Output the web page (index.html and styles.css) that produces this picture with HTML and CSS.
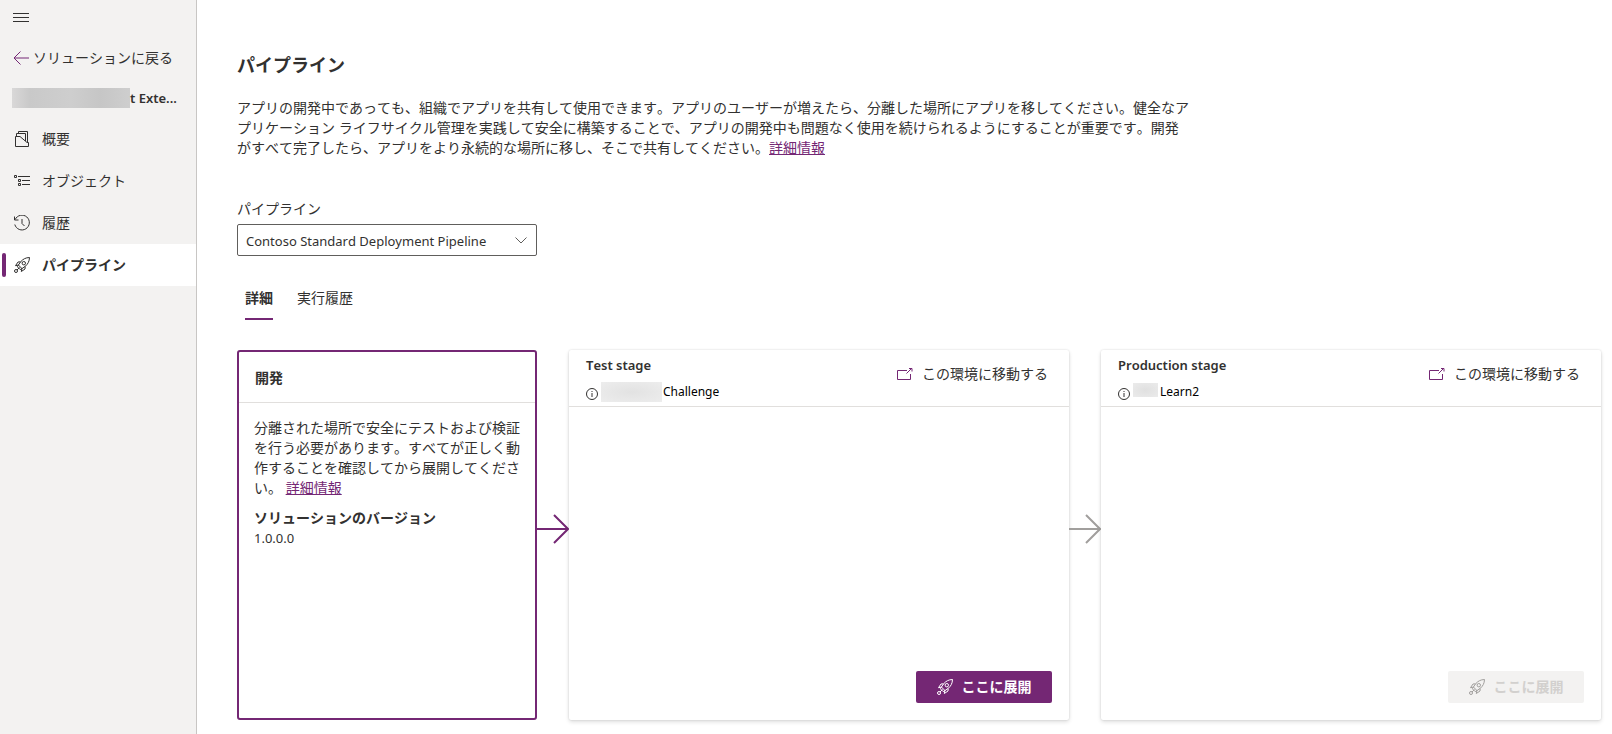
FILE: index.html
```html
<!DOCTYPE html>
<html lang="ja">
<head>
<meta charset="utf-8">
<meta name="viewport" content="width=device-width, initial-scale=1">
<title>パイプライン</title>
<link rel="stylesheet" href="styles.css">
</head>
<body>
<svg class="defs" aria-hidden="true">
  <symbol id="rocket" viewBox="0 0 16 16">
    <g fill="none" stroke="currentColor">
      <path d="M15.5.5C11.5.6 9 2.2 6.800 4.600L4.400 8l3.600 3.600 3.400-2.400C13.800 7 15.400 4.500 15.500.5z"/>
      <path d="M6.600 4.800 4 5 1.500 8.700l3-.6M11.200 9.400 11 12l-3.700 2.500.6-3M4.400 8l-1 1.800 2.800 2.800L8 11.600"/>
      <circle cx="9.800" cy="6.200" r="1.700"/>
      <circle cx="2" cy="14" r="1.500"/>
      <path d="M3 13l2.500-2.500"/>
    </g>
  </symbol>
  <symbol id="open" viewBox="0 0 16 12">
    <path fill="none" stroke="currentColor" d="M10 2.500H.5v9h13V6M9.500 5.500l5-5M12 .5h3v3"/>
  </symbol>
  <symbol id="info" viewBox="0 0 12 12">
    <circle cx="6" cy="6" r="5.500" fill="none" stroke="currentColor"/>
    <path fill="none" stroke="currentColor" d="M6 5v4M6 3v1"/>
  </symbol>
  <symbol id="arrow" viewBox="0 0 32 30">
    <path fill="none" stroke="currentColor" stroke-width="2" d="M0 15h31M17 1l14 14-14 14"/>
  </symbol>
</svg>
<div class="app">
  <nav class="sidebar">
    <button class="menu" type="button" aria-label="メニュー">
      <svg width="16" height="10" viewBox="0 0 16 10"><path fill="none" stroke="currentColor" d="M0 .5h16M0 4.500h16M0 8.500h16"/></svg>
    </button>
    <a class="back" href="#">
      <svg width="16" height="14" viewBox="0 0 16 14"><path fill="none" stroke="currentColor" d="M7.500.5 1 7l6.500 6.500M1 7h15"/></svg>
      <span>ソリューションに戻る</span>
    </a>
    <div class="solution"><span class="redacted redacted-name"></span><span>t Exte...</span></div>
    <ul class="nav">
      <li><a class="nav-item" href="#">
        <svg width="16" height="16" viewBox="0 0 16 16"><path fill="none" stroke="currentColor" d="M1.500 5.500v10h13v-4H13L6 5.500zM2.500 5V2.500h9v7.500M4.500 2V.5h9v10.500"/></svg>
        <span>概要</span></a></li>
      <li><a class="nav-item" href="#">
        <svg width="16" height="16" viewBox="0 0 16 16"><path fill="none" stroke="currentColor" d="M.5 2.500h2v2h-2zM4.500 6.500h2v2h-2zM4.500 10.500h2v2h-2zM4 3.500h12M8 7.500h8M8 11.500h8"/></svg>
        <span>オブジェクト</span></a></li>
      <li><a class="nav-item" href="#">
        <svg width="16" height="16" viewBox="0 0 16 16"><path fill="none" stroke="currentColor" d="M1.200 4.500A7.400 7.400 0 1 1 .8 9.500M.5 1.500v3.500H4.500M8 4v4.500L10.500 11"/></svg>
        <span>履歴</span></a></li>
      <li><a class="nav-item current" href="#" aria-current="page">
        <svg width="16" height="16"><use href="#rocket"/></svg>
        <span>パイプライン</span></a></li>
    </ul>
  </nav>
  <main class="main">
    <h1>パイプライン</h1>
    <p class="intro">アプリの開発中であっても、組織でアプリを共有して使用できます。アプリのユーザーが増えたら、分離した場所にアプリを移してください。健全なアプリケーション ライフサイクル管理を実践して安全に構築することで、アプリの開発中も問題なく使用を続けられるようにすることが重要です。開発がすべて完了したら、アプリをより永続的な場所に移し、そこで共有してください。<a href="#">詳細情報</a></p>
    <label class="field-label" for="pipeline">パイプライン</label>
    <div class="select-wrap">
      <select id="pipeline"><option>Contoso Standard Deployment Pipeline</option></select>
      <svg class="chevron" width="12" height="7" viewBox="0 0 12 7"><path fill="none" stroke="currentColor" d="M.5.5 6 6 11.500.5"/></svg>
    </div>
    <div class="tabs" role="tablist">
      <button class="tab selected" type="button" role="tab" aria-selected="true">詳細</button>
      <button class="tab" type="button" role="tab" aria-selected="false">実行履歴</button>
    </div>
    <div class="stages">
      <section class="dev">
        <h2 class="dev-head">開発</h2>
        <div class="dev-body">
          <p>分離された場所で安全にテストおよび検証を行う必要があります。すべてが正しく動作することを確認してから展開してください。 <a href="#">詳細情報</a></p>
          <h3>ソリューションのバージョン</h3>
          <p class="version">1.0.0.0</p>
        </div>
      </section>
      <svg class="arrow" width="32" height="30"><use href="#arrow"/></svg>
      <section class="stage">
        <header class="stage-head">
          <div>
            <h2>Test stage</h2>
            <div class="env"><svg width="12" height="12"><use href="#info"/></svg><span class="redacted redacted-test"></span><span>Challenge</span></div>
          </div>
          <a class="go" href="#"><svg width="16" height="12"><use href="#open"/></svg><span>この環境に移動する</span></a>
        </header>
        <button class="deploy" type="button"><svg width="16" height="16"><use href="#rocket"/></svg><span>ここに展開</span></button>
      </section>
      <svg class="arrow pending" width="32" height="30"><use href="#arrow"/></svg>
      <section class="stage">
        <header class="stage-head">
          <div>
            <h2>Production stage</h2>
            <div class="env"><svg width="12" height="12"><use href="#info"/></svg><span class="redacted redacted-prod"></span><span>Learn2</span></div>
          </div>
          <a class="go" href="#"><svg width="16" height="12"><use href="#open"/></svg><span>この環境に移動する</span></a>
        </header>
        <button class="deploy" type="button" disabled><svg width="16" height="16"><use href="#rocket"/></svg><span>ここに展開</span></button>
      </section>
    </div>
  </main>
</div>
</body>
</html>
```
FILE: styles.css
```css
* { box-sizing: border-box; }
body, h1, h2, h3, p, ul { margin: 0; padding: 0; }
body {
  font-family: "Noto Sans", "Noto Sans CJK JP", sans-serif;
  font-kerning: none;
  font-size: 14px;
  line-height: 20px;
  color: #323130;
  background: #fff;
}
button, select { font: inherit; font-kerning: none; color: inherit; }
button { border: 0; background: none; padding: 0; }
svg { flex: none; }
.defs { display: none; }
.app { display: flex; min-height: 100vh; }

.sidebar {
  flex: none;
  width: 197px;
  background: #f3f2f1;
  border-right: 1px solid #c8c6c4;
}
.menu { display: flex; padding: 13px; }
.back {
  display: flex;
  align-items: center;
  gap: 4px;
  height: 20px;
  margin-top: 12px;
  padding-left: 13px;
  color: inherit;
  text-decoration: none;
}
.back svg { color: #742774; }
.solution {
  display: flex;
  align-items: center;
  height: 20px;
  margin: 20px 0 10px;
  padding-left: 12px;
  font-size: 13px;
  font-weight: 600;
}
.redacted { flex: none; }
.redacted-name { width: 118px; height: 20px; background: linear-gradient(90deg, #d9d8d8, #c9c9c9 15%, #cecece 50%, #c6c6c6 75%, #cecece); }
.redacted-test { width: 61px; height: 20px; margin: 0 1px 0 3px; background: radial-gradient(#e2e2e2, #ededed); }
.redacted-prod { width: 25px; height: 14px; margin: 0 2px 4px 3px; background: radial-gradient(#e0e0e0, #ebebeb); }
.nav { list-style: none; }
.nav-item {
  display: flex;
  align-items: center;
  gap: 12px;
  height: 42px;
  padding-left: 14px;
  color: inherit;
  text-decoration: none;
}
.current { position: relative; background: #fff; font-weight: 600; }
.current::before {
  content: "";
  position: absolute;
  left: 2px;
  top: 9px;
  bottom: 9px;
  width: 4px;
  border-radius: 2px;
  background: #742774;
}

.main { flex: 1; min-width: 0; padding: 53px 11px 14px 40px; }
h1 { font-size: 18px; line-height: 24px; font-weight: 600; }
.intro { max-width: 954px; margin-top: 21px; }
.intro a, .dev a { color: #742774; }
.field-label { display: block; margin-top: 41px; }
.select-wrap { position: relative; width: 300px; margin-top: 5px; }
select {
  display: block;
  appearance: none;
  width: 100%;
  height: 32px;
  padding: 1px 28px 0 8px;
  border: 1px solid #605e5c;
  border-radius: 2px;
  background: #fff;
  font-size: 13px;
}
.chevron { position: absolute; right: 10px; top: 13px; color: #605e5c; pointer-events: none; }
.tabs { display: flex; gap: 24px; margin: 20px 0 30px 8px; }
.tab { height: 44px; padding-top: 2px; border-bottom: 2px solid transparent; }
.selected { border-color: #742774; font-weight: 600; }

.stages { display: flex; align-items: stretch; min-height: 370px; }
.dev { flex: none; width: 300px; border: 2px solid #742774; border-radius: 3px; }
h2, h3 { font-size: 14px; line-height: 20px; font-weight: 600; }
.dev-head { padding: 16px 16px 14px; border-bottom: 1px solid #e1dfdd; }
.dev-body { padding: 15px 14px 16px 15px; }
.dev-body h3 { margin-top: 10px; }
.version { font-size: 13px; }
.arrow { align-self: center; margin-bottom: 12px; color: #742774; }
.pending { color: #a19f9d; }
.stage {
  display: flex;
  flex-direction: column;
  flex: 1;
  min-width: 0;
  border-radius: 2px;
  box-shadow: 0 2px 4px rgba(0, 0, 0, .13), 0 0 2px rgba(0, 0, 0, .15);
}
.stage-head {
  display: flex;
  justify-content: space-between;
  height: 57px;
  padding: 5px 21px 4px 17px;
  border-bottom: 1px solid #e1dfdd;
}
.stage-head h2 { font-size: 13px; }
.env { display: flex; align-items: center; height: 20px; margin-top: 7px; font-size: 12px; line-height: 18px; color: #000; }
.env svg { color: #323130; margin-top: 3px; }
.go { display: flex; align-items: center; gap: 9px; height: 38px; color: inherit; text-decoration: none; }
.go svg { color: #742774; }
.deploy {
  display: flex;
  align-items: center;
  justify-content: center;
  gap: 9px;
  width: 136px;
  height: 32px;
  margin: auto 17px 17px auto;
  border-radius: 2px;
  background: #742774;
  color: #fff;
  font-weight: 600;
}
.deploy:disabled { background: #f3f2f1; color: #d2d0ce; }
.deploy:disabled svg { color: #a19f9d; }
```
